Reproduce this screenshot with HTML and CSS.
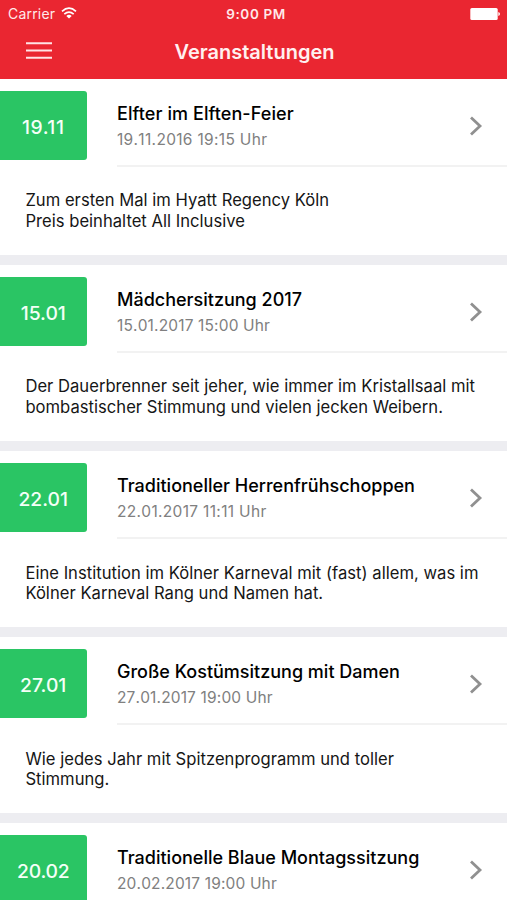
FILE: index.html
```html
<!DOCTYPE html>
<html lang="de">
<head>
<meta charset="utf-8">
<title>Veranstaltungen</title>
<link rel="stylesheet" href="styles.css">
</head>
<body>
<header class="header">
  <div class="status">
    <div class="carrier"><span>Carrier</span>
      <svg class="wifi" width="16" height="12" viewBox="0 0 16 12"><g fill="none" stroke="#fff" stroke-width="1.7"><path d="M1 4.3Q8-1.9 15 4.3"/><path d="M3.3 7.1Q8 3 12.7 7.1"/></g><path fill="#fff" d="M5.3 8.9Q8 6.8 10.7 8.9L8 11.6Z"/></svg>
    </div>
    <span class="time">9:00 PM</span>
    <svg class="battery" width="30" height="12" viewBox="0 0 30 12" fill="#fff"><rect x="0.3" y="0" width="27.4" height="12" rx="1.5"/><path d="M28.3 4Q30 4.4 30 6Q30 7.6 28.3 8Z"/></svg>
  </div>
  <div class="nav">
    <svg class="menu" width="26" height="17" viewBox="0 0 26 17" stroke="#ffe3e5" stroke-width="2"><path d="M0 1.2H26M0 8.5H26M0 15.8H26"/></svg>
    <h1 class="title">Veranstaltungen</h1>
  </div>
</header>
<main class="list">
  <article class="event">
    <div class="top"><div class="date ones">19.11</div><div class="info"><h2 class="wide">Elfter im Elften-Feier</h2><p class="many-ones">19.11.2016 19:15 Uhr</p><svg class="chevron" width="14" height="20" viewBox="0 0 14 20"><path d="M2 1.5L11 10L2 18.5"/></svg></div></div>
    <div class="text">Zum ersten Mal im Hyatt Regency Köln<br>Preis beinhaltet All Inclusive</div>
  </article>
  <article class="event">
    <div class="top"><div class="date">15.01</div><div class="info"><h2>Mädchersitzung 2017</h2><p>15.01.2017 15:00 Uhr</p><svg class="chevron" width="14" height="20" viewBox="0 0 14 20"><path d="M2 1.5L11 10L2 18.5"/></svg></div></div>
    <div class="text">Der Dauerbrenner seit jeher, wie immer im Kristallsaal mit<br>bombastischer Stimmung und vielen jecken Weibern.</div>
  </article>
  <article class="event">
    <div class="top"><div class="date">22.01</div><div class="info"><h2>Traditioneller Herrenfrühschoppen</h2><p class="many-ones">22.01.2017 11:11 Uhr</p><svg class="chevron" width="14" height="20" viewBox="0 0 14 20"><path d="M2 1.5L11 10L2 18.5"/></svg></div></div>
    <div class="text">Eine Institution im Kölner Karneval mit (fast) allem, was im<br>Kölner Karneval Rang und Namen hat.</div>
  </article>
  <article class="event">
    <div class="top"><div class="date">27.01</div><div class="info"><h2>Große Kostümsitzung mit Damen</h2><p>27.01.2017 19:00 Uhr</p><svg class="chevron" width="14" height="20" viewBox="0 0 14 20"><path d="M2 1.5L11 10L2 18.5"/></svg></div></div>
    <div class="text">Wie jedes Jahr mit Spitzenprogramm und toller<br>Stimmung.</div>
  </article>
  <article class="event">
    <div class="top"><div class="date zeros">20.02</div><div class="info"><h2>Traditionelle Blaue Montagssitzung</h2><p>20.02.2017 19:00 Uhr</p><svg class="chevron" width="14" height="20" viewBox="0 0 14 20"><path d="M2 1.5L11 10L2 18.5"/></svg></div></div>
  </article>
</main>
</body>
</html>
```
FILE: styles.css
```css
* { box-sizing: border-box; }
html, body { margin: 0; height: 900px; overflow: hidden; }
body { font-family: Inter, "Liberation Sans", sans-serif; background: #ededf1; color: #161616; }
h1, h2, p { margin: 0; }
.header { height: 79px; background: #ea2631; color: #fff; }
.status { height: 27px; padding: 0 7px 0 8px; display: grid; grid-template-columns: 1fr auto 1fr; align-items: center; font-size: 14px; letter-spacing: .2px; color: #ffe9ea; }
.carrier { display: flex; align-items: center; gap: 6px; }
.wifi { margin-top: -2px; }
.time { font-weight: 600; font-size: 13.5px; letter-spacing: .6px; padding-left: 4px; }
.battery { justify-self: end; }
.nav { height: 50px; display: grid; grid-template-columns: 77px 1fr 75px; align-items: center; }
.menu { margin: -3px 0 0 26px; }
.title { text-align: center; font-size: 20px; font-weight: 600; line-height: 24px; color: #fff0f0; }
.list { height: 821px; overflow: hidden; }
.event { height: 176.2px; margin-bottom: 9.9px; background: #fff; }
.event:last-child { margin-bottom: 0; }
.top { display: flex; height: 88px; padding-top: 12px; }
.date { width: 86.5px; height: 69px; padding-top: 2px; flex: none; background: #2ac564; color: #f4fff7; border-radius: 0 3px 3px 0; display: grid; place-items: center; font-size: 19.3px; font-weight: 500; }
.ones { letter-spacing: .5px; }
.zeros { letter-spacing: -.2px; }
.info { position: relative; flex: 1; margin-left: 30.5px; border-bottom: 2px solid #f2f2f2; padding-top: 11px; }
.info h2 { font-size: 18px; line-height: 23px; font-weight: 500; color: #000; white-space: nowrap; }
.info .wide { letter-spacing: .08px; }
.info p { padding-top: 1px; font-size: 15.5px; line-height: 27px; color: #808080; font-kerning: none; letter-spacing: .15px; }
.info .many-ones { letter-spacing: .32px; }
.chevron { position: absolute; right: 24px; top: 25px; fill: none; stroke: #909090; stroke-width: 2.8; }
.text { padding: 23.4px 0 0 25.4px; font-size: 16.6px; line-height: 20.4px; letter-spacing: .02px; white-space: nowrap; }
```
